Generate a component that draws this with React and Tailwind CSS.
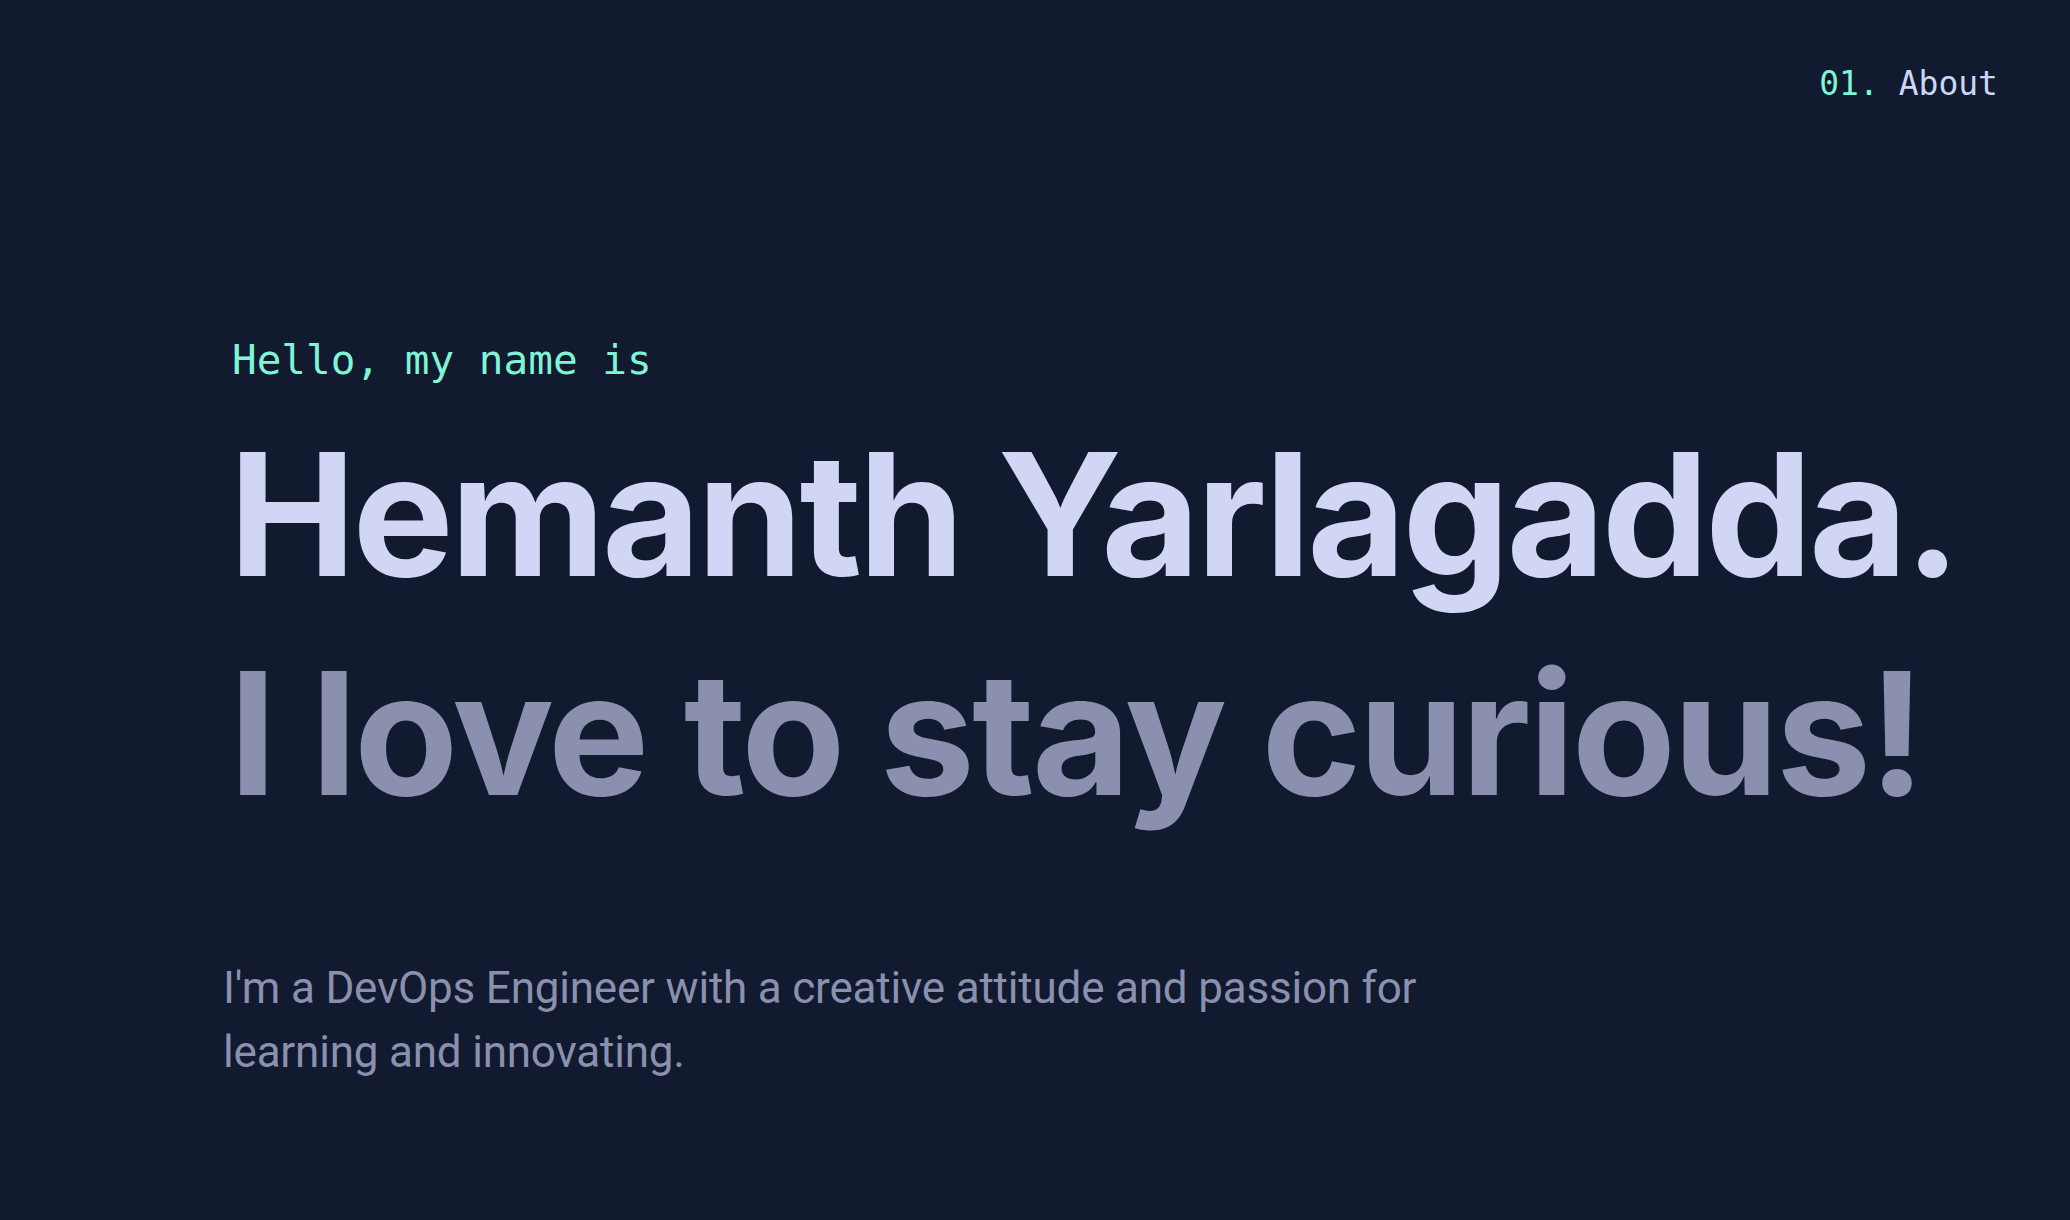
export default function App() {
  return (
    <div className="h-[1220px] w-full overflow-hidden bg-[#111a2e]">
      <nav className="flex justify-end pr-[72px] pt-[64px]">
        <a className="font-['DejaVu_Sans_Mono',monospace] text-[33px] leading-[40px] text-[#ccd6f6]">
          <span className="text-[#7ff5d6]">01.</span> About
        </a>
      </nav>
      <main className="flex flex-col pl-[232px] pt-[232px]">
        <p className="font-['DejaVu_Sans_Mono',monospace] text-[41px] leading-[48px] text-[#7ff5d6]">
          Hello, my name is
        </p>
        <h1 className="-ml-[3px] mt-[30px] font-['Inter',sans-serif] text-[170px] font-bold leading-[200px] tracking-[-3.5px] text-[#d1d6f5]">
          Hemanth Yarlagadda.
        </h1>
        <h2 className="-ml-[3px] mt-[19px] font-['Inter',sans-serif] text-[170px] font-bold leading-[200px] tracking-[-3px] text-[#8a90ae]">
          I love to stay curious!
        </h2>
        <p className="-ml-[9px] mt-[123px] max-w-[1290px] font-['Roboto',sans-serif] text-[44px] leading-[64px] tracking-[-0.2px] text-[#8a90ae]">
          I'm a DevOps Engineer with a creative attitude and passion for learning and innovating.
        </p>
      </main>
    </div>
  );
}
